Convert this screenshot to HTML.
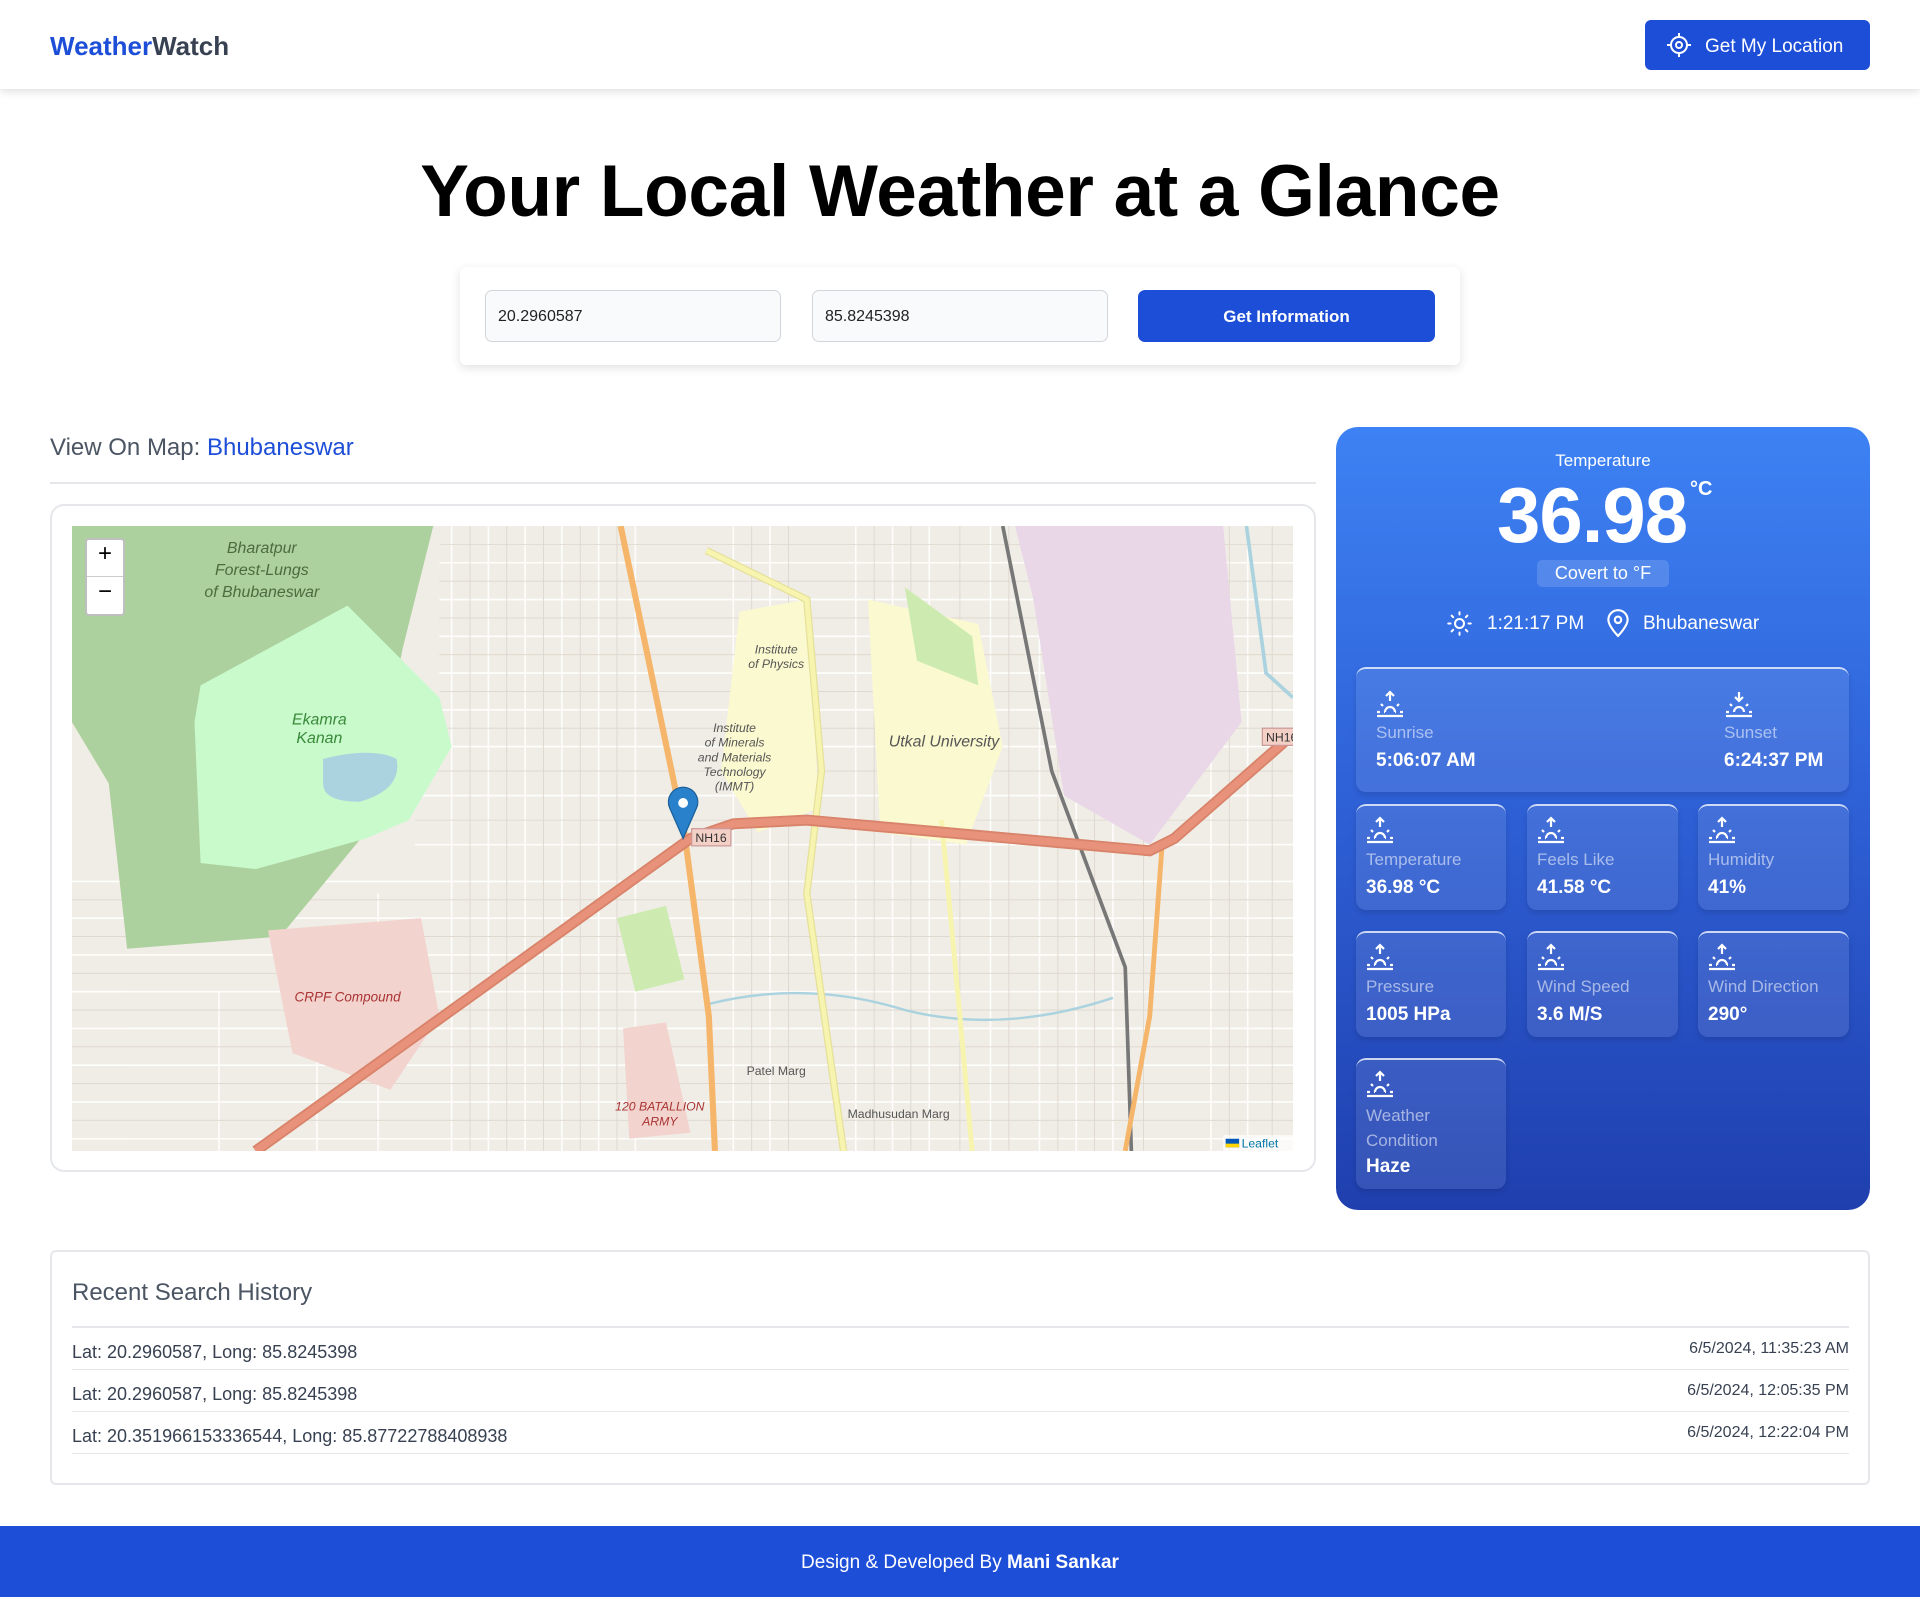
<!DOCTYPE html>
<html><head><meta charset="utf-8"><style>
*{box-sizing:border-box;margin:0;padding:0}
body{width:1920px;height:1597px;position:relative;background:#fff;font-family:"Liberation Sans",Arial,sans-serif;overflow:hidden;color:#111}
.a{position:absolute}
.hdr{left:0;top:0;width:1920px;height:89px;background:#fff;box-shadow:0 3px 8px rgba(0,0,0,.12)}
.logo{left:50px;top:31px;font-size:26px;font-weight:bold;color:#374151}
.logo b{color:#1d4ed8}
.btn{background:#1d4ed8;color:#fff;border-radius:6px}
.title{left:0;width:1920px;top:150px;text-align:center;font-size:73px;font-weight:bold;color:#000;letter-spacing:-0.3px}
.form{left:460px;top:267px;width:1000px;height:98px;background:#fff;border-radius:6px;box-shadow:0 3px 10px rgba(0,0,0,.12)}
.inp{top:290px;width:296px;height:52px;background:#f9fafb;border:1px solid #d1d5db;border-radius:7px;font-size:16px;color:#222;padding:17px 12px}
.wc{left:1336px;top:427px;width:534px;height:783px;border-radius:22px;background:linear-gradient(#3d82f4,#2f62d8 45%,#1f3fae)}
.box{background:rgba(255,255,255,.1);border-top:2px solid rgba(255,255,255,.75);border-radius:10px;box-shadow:0 3px 6px rgba(0,0,0,.12)}
.lbl{font-size:17px;color:rgba(255,255,255,.55)}
.val{font-size:19px;font-weight:bold;color:#fff}
.hist{left:50px;top:1250px;width:1820px;height:235px;border:2px solid #e5e7eb;border-radius:6px}
.row{left:72px;width:1777px;height:42px;border-bottom:1px solid #e5e7eb;font-size:18px;color:#374151;padding-top:14px}
.row span{position:absolute;right:0;top:12px;font-size:16px}
</style></head><body>
<div class="a hdr"></div>
<div class="a logo"><b>Weather</b>Watch</div>
<div class="a btn" style="left:1645px;top:20px;width:225px;height:50px"></div>
<svg class="a" style="left:1666px;top:32px" width="26" height="26" viewBox="0 0 26 26" fill="none" stroke="#fff" stroke-width="2"><circle cx="13" cy="13" r="8"/><circle cx="13" cy="13" r="3"/><path d="M13 1v4M13 21v4M1 13h4M21 13h4"/></svg>
<div class="a" style="left:1705px;top:36px;font-size:19px;color:#fff">Get My Location</div>

<div class="a title">Your Local Weather at a Glance</div>
<div class="a form"></div>
<div class="a inp" style="left:485px">20.2960587</div>
<div class="a inp" style="left:812px">85.8245398</div>
<div class="a btn" style="left:1138px;top:290px;width:297px;height:52px;font-size:17px;font-weight:bold;text-align:center;line-height:54px;border-radius:7px">Get Information</div>

<div class="a" style="left:50px;top:434px;font-size:24px;color:#4b5563">View On Map: <span style="color:#1d4ed8">Bhubaneswar</span></div>
<div class="a" style="left:50px;top:482px;width:1266px;height:2px;background:#e5e7eb"></div>
<div class="a" style="left:50px;top:504px;width:1266px;height:668px;border:2px solid #e5e7eb;border-radius:14px"></div>
<svg class="a" style="left:72px;top:526px" width="1221" height="625" viewBox="0 0 997 510" preserveAspectRatio="none">
<rect width="997" height="510" fill="#f0ede6"/>
<g stroke="#fff" stroke-width="1.3" fill="none" opacity=".9">
<path d="M310 0v510M340 0v510M370 0v510M400 0v510M430 0v510M460 0v510M540 0v510M570 0v510M640 0v510M670 0v510M700 0v510M750 0v510M790 0v510M820 0v510M850 0v510M930 0v510M960 0v510M250 300v210M200 350v160M120 380v130"/>
<path d="M300 30h700M300 60h700M300 90h700M300 120h700M300 150h700M300 180h700M280 220h720M280 260h720M0 290h1000M0 320h1000M0 350h1000M0 380h1000M0 410h1000M0 440h1000M0 470h1000M0 500h1000"/>
</g>
<g stroke="#ddd6cc" stroke-width=".7" fill="none"><path d="M300 15h700M300 45h700M300 75h700M300 105h700M300 135h700M300 165h700M280 200h720M280 240h720M0 305h1000M0 335h1000M0 365h1000M0 395h1000M0 425h1000M0 455h1000M0 485h1000M325 0v510M355 0v510M385 0v510M415 0v510M445 0v510M555 0v510M585 0v510M655 0v510M685 0v510M725 0v510M765 0v510M805 0v510M835 0v510M875 0v510M945 0v510M980 0v510"/></g>
<path d="M10 0H295L270 100 240 250 170 335 45 345 30 210 0 160V0Z" fill="#add19e"/>
<path d="M105 130L225 65 300 140 310 180 275 240 240 255 150 280 105 275 100 160Z" fill="#c8facc"/>
<path d="M205 190q40-10 60 0q5 25-30 35q-30 0-30-15z" fill="#aad3df"/>
<path d="M770 0H940L955 160 880 260 810 220 785 60Z" fill="#e9d7e8"/>
<path d="M545 70L600 60 610 230 560 250 530 200Z" fill="#fbf9d0"/>
<path d="M650 60L740 80 760 180 730 260 660 250Z" fill="#fbf9d0"/>
<path d="M680 50L735 90 740 130 690 110Z" fill="#cdebb0"/>
<path d="M160 330L285 320 300 400 260 460 180 430Z" fill="#f2d3ce"/>
<path d="M445 320l40-10 15 60-40 10z" fill="#cdebb0"/>
<path d="M450 410l35-5 20 90-50 5z" fill="#f2d3ce"/>
<path d="M959 0L975 120 997 140" stroke="#aad3df" stroke-width="3" fill="none"/>
<path d="M520 390q80-20 160 5q80 20 170-10" stroke="#aad3df" stroke-width="2" fill="none"/>
<path d="M760 0L800 200 860 360 865 510" stroke="#777" stroke-width="3" fill="none"/>
<path d="M518 20L600 60 612 200 600 300 630 510" stroke="#e5e09a" stroke-width="6" fill="none"/>
<path d="M518 20L600 60 612 200 600 300 630 510" stroke="#f7f4b0" stroke-width="4" fill="none"/>
<path d="M710 240L725 400 735 510" stroke="#f7f4b0" stroke-width="4" fill="none"/>
<path d="M448 0L500 250 520 400 525 510" stroke="#f5b66b" stroke-width="5" fill="none"/>
<path d="M890 262L880 400 860 510" stroke="#f5b66b" stroke-width="4" fill="none"/>
<path d="M150 510L505 255 540 243 600 240 880 265 900 255 997 170" stroke="#d8836a" stroke-width="9" fill="none"/>
<path d="M150 510L505 255 540 243 600 240 880 265 900 255 997 170" stroke="#e8927c" stroke-width="6" fill="none"/>
<g font-family="Liberation Sans,sans-serif" font-style="italic" font-size="13" fill="#555" text-anchor="middle">
<text x="155" y="22" fill="#4d6b40">Bharatpur</text><text x="155" y="40" fill="#4d6b40">Forest-Lungs</text><text x="155" y="58" fill="#4d6b40">of Bhubaneswar</text>
<text x="202" y="162" fill="#3a8a3a">Ekamra</text><text x="202" y="177" fill="#3a8a3a">Kanan</text>
<text x="575" y="104" font-size="10">Institute</text><text x="575" y="116" font-size="10">of Physics</text>
<text x="541" y="168" font-size="10">Institute</text><text x="541" y="180" font-size="10">of Minerals</text><text x="541" y="192" font-size="10">and Materials</text><text x="541" y="204" font-size="10">Technology</text><text x="541" y="216" font-size="10">(IMMT)</text>
<text x="712" y="180">Utkal University</text>
<text x="225" y="388" fill="#a33" font-size="11">CRPF Compound</text>
<text x="480" y="477" fill="#a33" font-size="10">120 BATALLION</text><text x="480" y="489" fill="#a33" font-size="10">ARMY</text>
<text x="575" y="448" font-size="10" font-style="normal">Patel Marg</text>
<text x="675" y="483" font-size="10" font-style="normal">Madhusudan Marg</text>
</g>
<rect x="506" y="247" width="32" height="14" fill="#f3d0c6" stroke="#c99"/><text x="509" y="258" font-size="10" font-family="Liberation Sans" fill="#333">NH16</text>
<rect x="972" y="165" width="30" height="14" fill="#f3d0c6" stroke="#c99"/><text x="975" y="176" font-size="10" font-family="Liberation Sans" fill="#333">NH16</text>
<path d="M499 255l-11-25a12 12 0 1 1 22 0z" fill="#2a81cb" stroke="#1a5f99"/><circle cx="499" cy="226" r="4" fill="#fff"/>
<rect x="940" y="497" width="57" height="13" fill="rgba(255,255,255,.7)"/><rect x="942" y="500" width="11" height="7" fill="#0057b7"/><rect x="942" y="504" width="11" height="3" fill="#ffd500"/><text x="955" y="507" font-size="10" fill="#0078a8" font-family="Liberation Sans">Leaflet</text>
</svg>
<div class="a" style="left:85px;top:538px;width:40px;height:78px;background:#fff;border:2px solid rgba(0,0,0,.25);border-radius:4px"></div>
<div class="a" style="left:87px;top:576px;width:36px;height:1px;background:#ccc"></div>
<div class="a" style="left:85px;top:540px;width:40px;text-align:center;font-size:24px;color:#000">+</div>
<div class="a" style="left:85px;top:578px;width:40px;text-align:center;font-size:24px;color:#000">−</div>

<div class="a wc"></div>
<div class="a" style="left:1336px;top:451px;width:534px;text-align:center;font-size:17px;color:#fff">Temperature</div>
<div class="a" style="left:1497px;top:470px;font-size:78px;font-weight:bold;color:#fff;letter-spacing:-1px">36.98</div>
<div class="a" style="left:1690px;top:478px;font-size:20px;font-weight:bold;color:#fff">°C</div>
<div class="a" style="left:1537px;top:560px;width:132px;height:27px;background:rgba(255,255,255,.15);border-radius:5px;text-align:center;font-size:18px;line-height:27px;color:#fff">Covert to °F</div>
<svg class="a" style="left:1446px;top:610px" width="27" height="27" viewBox="0 0 24 24" fill="none" stroke="#fff" stroke-width="1.8" stroke-linecap="round"><circle cx="12" cy="12" r="4"/><path d="M12 2v2M12 20v2M2 12h2M20 12h2M5 5l1.4 1.4M17.6 17.6L19 19M5 19l1.4-1.4M17.6 6.4L19 5"/></svg>
<div class="a" style="left:1487px;top:613px;font-size:19px;color:#fff">1:21:17 PM</div>
<svg class="a" style="left:1605px;top:608px" width="26" height="30" viewBox="0 0 24 28" fill="none" stroke="#fff" stroke-width="2"><path d="M12 26s-9-9-9-15a9 9 0 0 1 18 0c0 6-9 15-9 15z"/><circle cx="12" cy="11" r="3"/></svg>
<div class="a" style="left:1643px;top:613px;font-size:19px;color:#fff">Bhubaneswar</div>

<svg width="0" height="0" style="position:absolute"><defs>
<symbol id="su" viewBox="0 0 28 28"><g fill="none" stroke="#fff" stroke-width="2.2"><path d="M14 2v9M10 6l4-4 4 4"/><path d="M9 22a5 5 0 0 1 10 0"/><path d="M5 14l2 2M23 14l-2 2M1 22h3M24 22h3M8 22h1M19 22h1M1 26h26"/></g></symbol>
<symbol id="sd" viewBox="0 0 28 28"><g fill="none" stroke="#fff" stroke-width="2.2"><path d="M14 2v9M10 7l4 4 4-4"/><path d="M9 22a5 5 0 0 1 10 0"/><path d="M5 14l2 2M23 14l-2 2M1 22h3M24 22h3M1 26h26"/></g></symbol>
</defs></svg>

<div class="a box" style="left:1356px;top:667px;width:493px;height:125px"></div>
<svg class="a" style="left:1376px;top:690px" width="28" height="28"><use href="#su"/></svg>
<div class="a lbl" style="left:1376px;top:723px">Sunrise</div>
<div class="a val" style="left:1376px;top:750px">5:06:07 AM</div>
<svg class="a" style="left:1725px;top:690px" width="28" height="28"><use href="#sd"/></svg>
<div class="a lbl" style="left:1724px;top:723px">Sunset</div>
<div class="a val" style="left:1724px;top:750px">6:24:37 PM</div>

<div class="a box" style="left:1356px;top:804px;width:150px;height:106px"></div>
<div class="a box" style="left:1527px;top:804px;width:151px;height:106px"></div>
<div class="a box" style="left:1698px;top:804px;width:151px;height:106px"></div>
<div class="a box" style="left:1356px;top:931px;width:150px;height:106px"></div>
<div class="a box" style="left:1527px;top:931px;width:151px;height:106px"></div>
<div class="a box" style="left:1698px;top:931px;width:151px;height:106px"></div>
<div class="a box" style="left:1356px;top:1058px;width:150px;height:131px"></div>

<svg class="a" style="left:1366px;top:816px" width="28" height="28"><use href="#su"/></svg>
<div class="a lbl" style="left:1366px;top:850px">Temperature</div><div class="a val" style="left:1366px;top:877px">36.98 °C</div>
<svg class="a" style="left:1537px;top:816px" width="28" height="28"><use href="#su"/></svg>
<div class="a lbl" style="left:1537px;top:850px">Feels Like</div><div class="a val" style="left:1537px;top:877px">41.58 °C</div>
<svg class="a" style="left:1708px;top:816px" width="28" height="28"><use href="#su"/></svg>
<div class="a lbl" style="left:1708px;top:850px">Humidity</div><div class="a val" style="left:1708px;top:877px">41%</div>

<svg class="a" style="left:1366px;top:943px" width="28" height="28"><use href="#su"/></svg>
<div class="a lbl" style="left:1366px;top:977px">Pressure</div><div class="a val" style="left:1366px;top:1004px">1005 HPa</div>
<svg class="a" style="left:1537px;top:943px" width="28" height="28"><use href="#su"/></svg>
<div class="a lbl" style="left:1537px;top:977px">Wind Speed</div><div class="a val" style="left:1537px;top:1004px">3.6 M/S</div>
<svg class="a" style="left:1708px;top:943px" width="28" height="28"><use href="#su"/></svg>
<div class="a lbl" style="left:1708px;top:977px">Wind Direction</div><div class="a val" style="left:1708px;top:1004px">290°</div>

<svg class="a" style="left:1366px;top:1070px" width="28" height="28"><use href="#su"/></svg>
<div class="a lbl" style="left:1366px;top:1103px;line-height:25px">Weather<br>Condition</div><div class="a val" style="left:1366px;top:1156px">Haze</div>

<div class="a hist"></div>
<div class="a" style="left:72px;top:1279px;font-size:24px;color:#4b5563">Recent Search History</div>
<div class="a" style="left:72px;top:1326px;width:1777px;height:2px;background:#e5e7eb"></div>
<div class="a row" style="top:1328px">Lat: 20.2960587, Long: 85.8245398<span>6/5/2024, 11:35:23 AM</span></div>
<div class="a row" style="top:1370px">Lat: 20.2960587, Long: 85.8245398<span>6/5/2024, 12:05:35 PM</span></div>
<div class="a row" style="top:1412px">Lat: 20.351966153336544, Long: 85.87722788408938<span>6/5/2024, 12:22:04 PM</span></div>

<div class="a" style="left:0;top:1526px;width:1920px;height:71px;background:#1d4ed8;color:#fff;text-align:center;font-size:19px;line-height:74px">Design &amp; Developed By <b>Mani Sankar</b></div>
</body></html>
